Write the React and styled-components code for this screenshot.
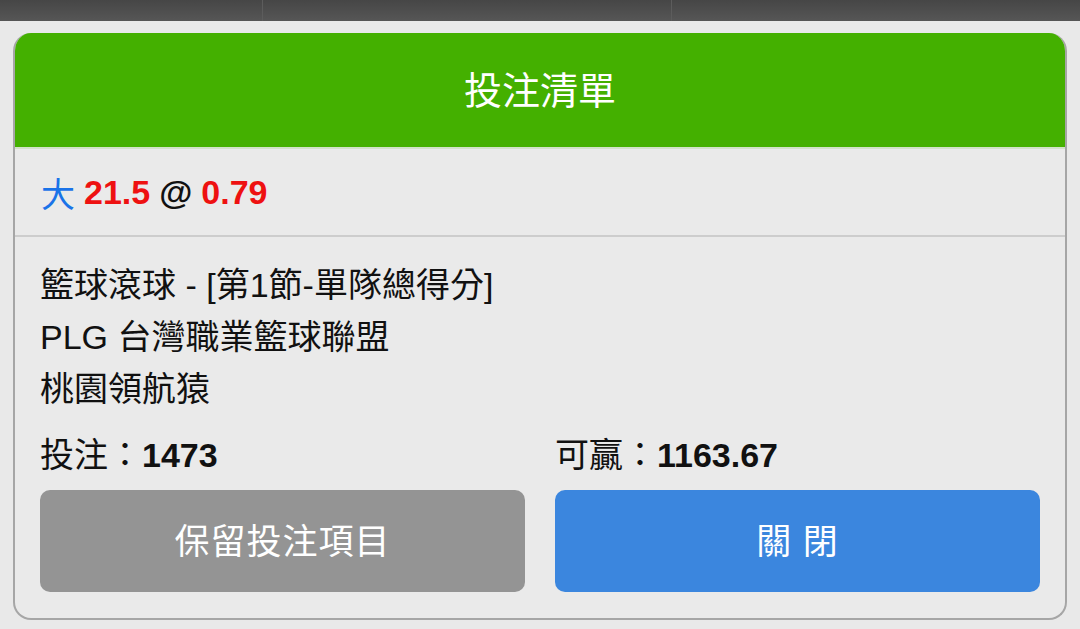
import React from "react";
import styled, { createGlobalStyle } from "styled-components";

const GlobalStyle = createGlobalStyle`
  html, body {
    margin: 0;
    padding: 0;
    background: #e9e9e9;
    font-family: "Liberation Sans", "Noto Sans CJK TC", sans-serif;
  }
`;

export const Page = styled.div`
  width: 1080px;
  height: 629px;
  overflow: hidden;
  background: #e9e9e9;
`;

export const TopBar = styled.div`
  height: 21px;
  display: grid;
  grid-template-columns: 263px 409px 1fr;
  background: linear-gradient(#464646, #565656);
`;

export const TopTab = styled.div`
  border-right: 1px solid ${(p) => (p.last ? "transparent" : "#5c5c5c")};
`;

export const Card = styled.div`
  margin: 12px 13px 0;
  border: 2px solid #a6a6a6;
  border-top: 0;
  border-radius: 18px;
  overflow: hidden;
  background: #eaeaea;
`;

export const Header = styled.div`
  height: 116px;
  margin: 0 -2px;
  background: #44b000;
  border-bottom: 2px solid #d2e2c8;
  display: flex;
  align-items: center;
  justify-content: center;
  padding-bottom: 5px;
  box-sizing: border-box;
  color: #fff;
  font-size: 38px;
`;

export const OddsRow = styled.div`
  height: 86px;
  padding-left: 26px;
  display: flex;
  align-items: center;
  gap: 9px;
  font-size: 34px;
  border-bottom: 2px solid #cdcdcd;
`;

export const Mark = styled.span`
  color: ${(p) => p.color || "#111"};
  font-weight: ${(p) => (p.light ? 400 : 700)};
`;

export const Body = styled.div`
  padding: 22px 25px 26px;
`;

export const InfoLine = styled.div`
  font-size: 34px;
  line-height: 52px;
  color: #111;
`;

export const Columns = styled.div`
  display: grid;
  grid-template-columns: 1fr 1fr;
  column-gap: 30px;
`;

export const Stake = styled.div`
  margin-top: 14px;
  font-size: 34px;
  line-height: 52px;
  color: #111;
  b {
    font-weight: 700;
  }
`;

export const Button = styled.div`
  margin-top: 9px;
  height: 102px;
  border-radius: 10px;
  background: ${(p) => (p.primary ? "#3b86de" : "#949494")};
  color: #fff;
  font-size: 35px;
  display: flex;
  align-items: center;
  justify-content: center;
  padding-bottom: 6px;
  box-sizing: border-box;
  letter-spacing: 1px;
`;

export default function App() {
  return (
    <Page>
      <GlobalStyle />
      <TopBar>
        <TopTab />
        <TopTab />
        <TopTab last />
      </TopBar>
      <Card>
        <Header>投注清單</Header>
        <OddsRow>
          <Mark color="#1a73e8" light>大</Mark>
          <Mark color="#ee1111">21.5</Mark>
          <Mark>@</Mark>
          <Mark color="#ee1111">0.79</Mark>
        </OddsRow>
        <Body>
          <InfoLine>籃球滾球 - [第1節-單隊總得分]</InfoLine>
          <InfoLine>PLG 台灣職業籃球聯盟</InfoLine>
          <InfoLine>桃園領航猿</InfoLine>
          <Columns>
            <Stake>
              投注：<b>1473</b>
            </Stake>
            <Stake>
              可贏：<b>1163.67</b>
            </Stake>
            <Button>保留投注項目</Button>
            <Button primary>關 閉</Button>
          </Columns>
        </Body>
      </Card>
    </Page>
  );
}
